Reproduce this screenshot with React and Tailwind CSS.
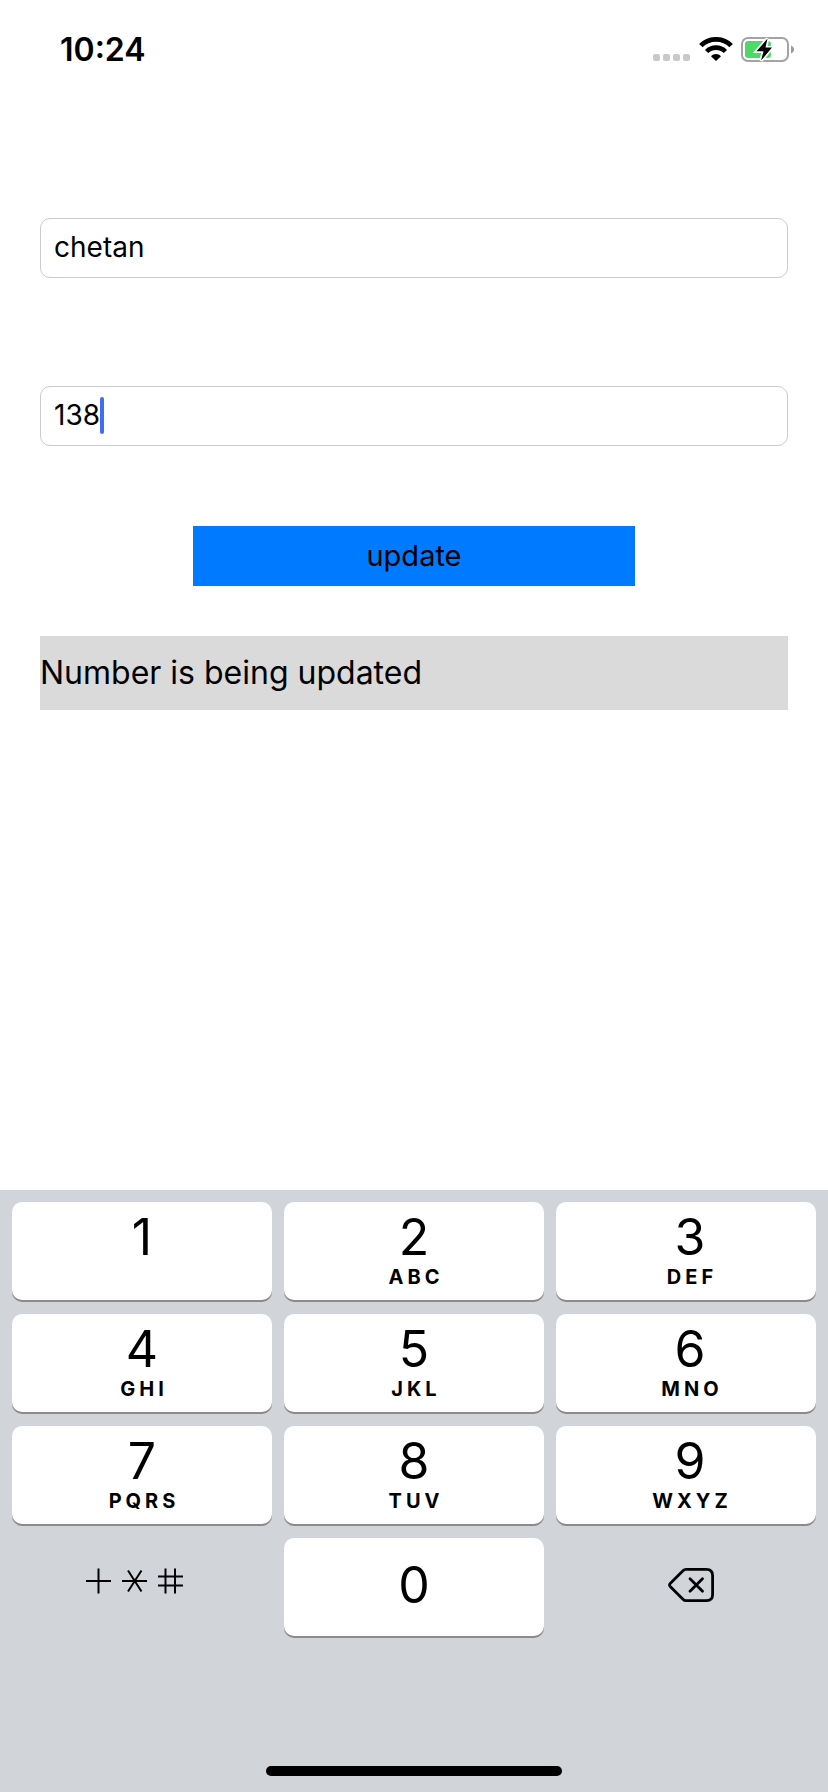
const KEYS = [
  ["1", ""],
  ["2", "ABC"],
  ["3", "DEF"],
  ["4", "GHI"],
  ["5", "JKL"],
  ["6", "MNO"],
  ["7", "PQRS"],
  ["8", "TUV"],
  ["9", "WXYZ"],
];

function WifiIcon() {
  return (
    <svg width="34" height="24" viewBox="0 0 34 24" fill="none" stroke="#000" aria-hidden="true">
      <path d="M1.9 8.6C10 0.3 24 0.3 32.1 8.6" strokeWidth="4.8" />
      <path d="M7.6 14.5C12.7 9.3 21.3 9.3 26.4 14.5" strokeWidth="4.6" />
      <path d="M12 19.2C14.8 16.4 19.2 16.4 22 19.2L17 24Z" fill="#000" stroke="none" />
    </svg>
  );
}

function BatteryIcon() {
  return (
    <svg width="54" height="26" viewBox="0 0 54 26" aria-hidden="true">
      <rect x="1" y="1" width="46" height="23" rx="6" fill="#fff" stroke="#a3a3a3" strokeWidth="2" />
      <path d="M50 8.500C54 10 54 15 50 16.500Z" fill="#9a9a9a" />
      <rect x="4" y="4" width="26" height="17" rx="3" fill="#4cd964" />
      <path
        d="M26.500 1.600L15.500 14.300H22.500L20 23.600L31 10.600H24.500Z"
        fill="#000"
        stroke="#fff"
        strokeWidth="3.400"
        paintOrder="stroke"
      />
    </svg>
  );
}

function SymbolsIcon() {
  return (
    <svg width="98" height="26" viewBox="0 0 98 26" fill="none" stroke="#000" strokeWidth="2" aria-hidden="true">
      <path d="M0 13H25M12.500 0.500V25.500" />
      <path d="M36 13H61M42 2.500L55.500 23.500M55.500 2.500L42 23.500" />
      <path d="M72 8.500H97M72 17.500H97M79.500 0.500V25.500M89 0.500V25.500" />
    </svg>
  );
}

function DeleteIcon() {
  return (
    <svg
      width="46"
      height="34"
      viewBox="0 0 46 34"
      fill="none"
      stroke="#000"
      strokeLinecap="round"
      strokeLinejoin="round"
      aria-hidden="true"
    >
      <path
        d="M18 1.400H38.500Q44.600 1.400 44.600 7.500V26.500Q44.600 32.600 38.500 32.600H18Q16.400 32.600 15.200 31.400L2.200 18.400Q0.800 17 2.200 15.600L15.200 2.600Q16.400 1.400 18 1.400Z"
        strokeWidth="2.800"
      />
      <path d="M22 10.700L34.500 23.300M34.500 10.700L22 23.300" strokeWidth="2.800" />
    </svg>
  );
}

const keyStyle =
  "flex h-[98px] flex-col items-center rounded-[10px] bg-white shadow-[0_2px_0_#898b8f]";

export default function App() {
  return (
    <div className="flex min-h-screen flex-col bg-white font-['Inter',sans-serif] text-black">
      <header className="flex h-[100px] items-center justify-between pr-[33px] pl-[60px]">
        <time className="text-[32px] leading-10 font-semibold">10:24</time>
        <div className="flex items-center gap-2">
          <div className="flex items-end gap-[9px] pb-[2px]">
            <div className="flex gap-[3px]">
              {[0, 1, 2, 3].map((dot) => (
                <span key={dot} className="size-[7px] rounded-[2px] bg-[#c9c9c9]" />
              ))}
            </div>
            <WifiIcon />
          </div>
          <BatteryIcon />
        </div>
      </header>

      <main className="flex flex-1 flex-col px-10 pt-[118px]">
        <form className="flex flex-col" onSubmit={(e) => e.preventDefault()}>
          <input
            type="text"
            aria-label="Name"
            defaultValue="chetan"
            className="h-[60px] w-full rounded-[10px] border border-[#cbcbcb] px-[13px] pb-[2px] text-[28px] outline-none"
          />
          <label className="mt-[108px] flex h-[60px] items-center rounded-[10px] border border-[#cbcbcb] px-[13px] pb-[2px]">
            <input
              type="tel"
              aria-label="Number"
              defaultValue="138"
              className="field-sizing-content text-[28px] outline-none"
            />
            <span className="h-[37px] w-1 rounded-sm bg-[#426cf2]" />
          </label>
          <button
            type="submit"
            className="mx-[153px] mt-20 h-[60px] rounded-none border-0 bg-[#007aff] text-[29px]"
          >
            update
          </button>
        </form>
        <p className="mt-[50px] flex h-[74px] items-center bg-[#dadada] text-[32px]">
          Number is being updated
        </p>
      </main>

      <section aria-label="Keypad" className="bg-[#d1d4d9] px-3 pt-3 pb-4">
        <div className="grid grid-cols-3 gap-x-3 gap-y-[14px]">
          {KEYS.map(([digit, letters]) => (
            <button key={digit} type="button" className={keyStyle + " pt-[10px] nth-[3n]:pl-2"}>
              <span className="text-[50px] leading-[50px]">{digit}</span>
              <span className="pl-1 text-[20px] leading-[30px] font-bold tracking-[4px]">{letters}</span>
            </button>
          ))}
          <button type="button" aria-label="Symbols" className="flex h-[98px] items-center justify-center pr-[14px] pb-3">
            <SymbolsIcon />
          </button>
          <button type="button" className={keyStyle + " justify-center pb-1"}>
            <span className="text-[50px] leading-[50px]">0</span>
          </button>
          <button type="button" aria-label="Delete" className="flex h-[98px] items-center justify-center pb-1 pl-[10px]">
            <DeleteIcon />
          </button>
        </div>
        <div className="mx-auto mt-[130px] h-[10px] w-[296px] rounded-full bg-black" />
      </section>
    </div>
  );
}
